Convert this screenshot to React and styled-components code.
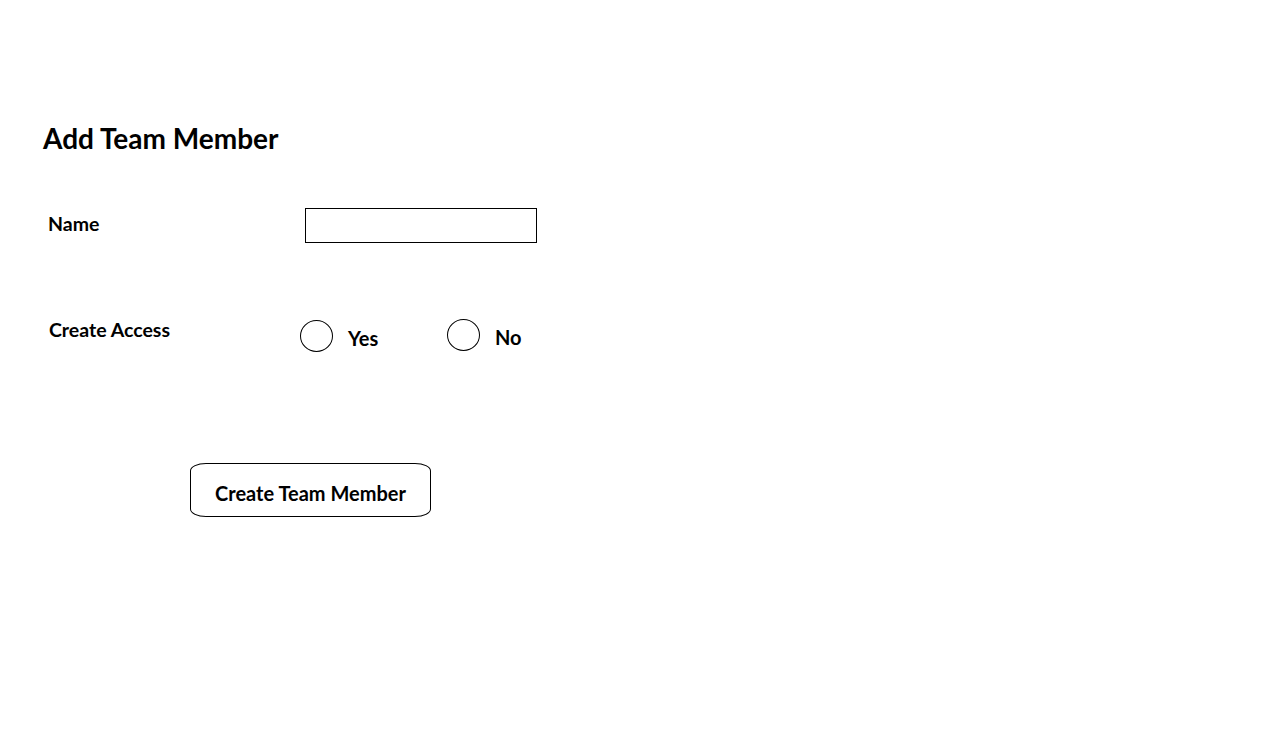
import React, { useState } from 'react';
import styled, { createGlobalStyle } from 'styled-components';

const GlobalStyle = createGlobalStyle`
  body {
    margin: 0;
    background: #fff;
    font-family: Lato, "Open Sans", sans-serif;
    color: #000;
  }
`;

function App() {
  const [name, setName] = useState('');
  const [access, setAccess] = useState('');

  return (
    <>
      <GlobalStyle />
      <Page>
        <Title>Add Team Member</Title>
        <FormRow>
          <Label offset="5px">Name</Label>
          <NameInput value={name} onChange={(e) => setName(e.target.value)} />
        </FormRow>
        <AccessRow>
          <Label>Create Access</Label>
          <RadioGroup>
            <RadioOption>
              <Circle checked={access === 'yes'} onClick={() => setAccess('yes')} />
              <OptionText>Yes</OptionText>
            </RadioOption>
            <RadioOption up>
              <Circle checked={access === 'no'} onClick={() => setAccess('no')} />
              <OptionText>No</OptionText>
            </RadioOption>
          </RadioGroup>
        </AccessRow>
        <ButtonRow>
          <CreateButton>Create Team Member</CreateButton>
        </ButtonRow>
      </Page>
    </>
  );
}

export default App;

const Page = styled.div`
  padding: 122px 0 0 43px;
  display: flex;
  flex-direction: column;
`;

const Title = styled.h1`
  margin: 0;
  font-size: 28px;
  font-weight: 700;
  line-height: 32px;
`;

const FormRow = styled.div`
  display: flex;
  align-items: flex-start;
  margin-top: 54px;
  padding-left: 5px;
`;

const Label = styled.div`
  width: 257px;
  padding-top: ${(p) => p.offset || '0'};
  font-size: 19.5px;
  font-weight: 700;
  line-height: 22px;
`;

const NameInput = styled.input`
  box-sizing: border-box;
  width: 232px;
  height: 35px;
  border: 1px solid #000;
  border-radius: 0;
  outline: none;
  padding: 0 6px;
  font-family: inherit;
`;

const AccessRow = styled.div`
  display: flex;
  align-items: flex-start;
  margin-top: 76px;
  padding-left: 6px;
`;

const RadioGroup = styled.div`
  display: flex;
  gap: 50px;
  margin-left: -6px;
  margin-top: 1px;
`;

const RadioOption = styled.label`
  display: flex;
  align-items: center;
  gap: 15px;
  width: 97px;
  margin-top: ${(p) => (p.up ? '-2px' : '0')};
  cursor: pointer;
`;

const Circle = styled.span`
  box-sizing: border-box;
  width: 33px;
  height: 32px;
  border: 1px solid #000;
  border-radius: 50%;
  background: ${(p) => (p.checked ? 'radial-gradient(circle, #000 0 6px, #fff 7px)' : '#fff')};
  flex-shrink: 0;
`;

const OptionText = styled.span`
  font-size: 20px;
  font-weight: 700;
  line-height: 22px;
  padding-top: 3px;
`;

const ButtonRow = styled.div`
  display: flex;
  margin-top: 111px;
  padding-left: 147px;
`;

const CreateButton = styled.button`
  box-sizing: border-box;
  width: 241px;
  height: 54px;
  border: 1px solid #000;
  border-radius: 16px / 8px;
  background: #fff;
  font-family: Lato, "Open Sans", sans-serif;
  font-size: 20px;
  font-weight: 700;
  color: #000;
  padding: 6px 0 0;
  cursor: pointer;
`;
